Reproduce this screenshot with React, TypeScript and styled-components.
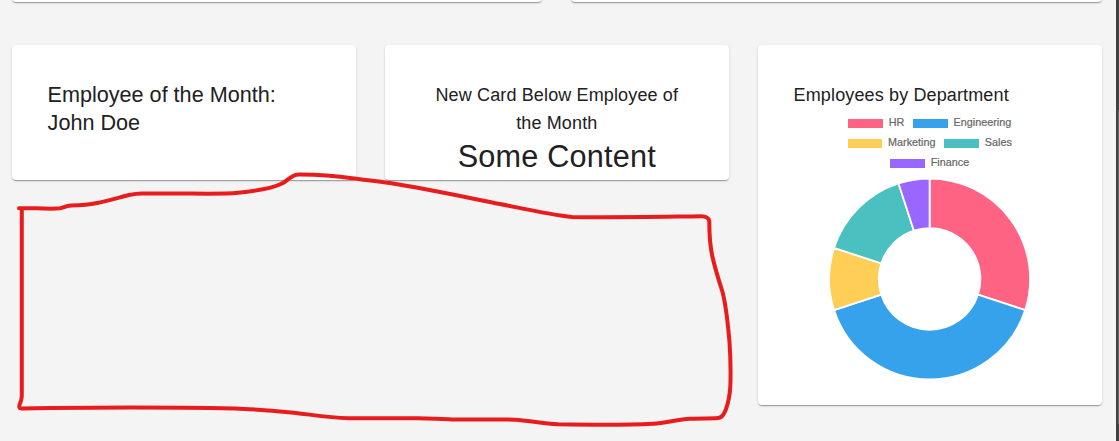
import React from "react";
import styled, { createGlobalStyle } from "styled-components";

const GlobalStyle = createGlobalStyle`
  * { box-sizing: border-box; }
  body { margin: 0; background: #f4f4f4; overflow: hidden; }
`;

const Page = styled.div`
  position: relative;
  display: flex;
  height: 441px;
  overflow: hidden;
  background: #f4f4f4;
  color: #212121;
  font-family: "Liberation Sans", Arial, sans-serif;
`;

const Content = styled.main`
  flex: 1;
  display: flex;
  flex-direction: column;
  gap: 43px;
  padding: 0 14px 0 12px;
`;

const UpperRow = styled.div`
  display: grid;
  grid-template-columns: 530px 531px;
  grid-template-rows: 2px;
  gap: 29px;
  height: 2px;
  align-items: end;
`;

const CardRow = styled.div`
  display: grid;
  grid-template-columns: repeat(3, 344px);
  gap: 29px;
  align-items: start;
`;

const Card = styled.section<{ $height: number; $center?: boolean }>`
  height: ${(p) => p.$height}px;
  padding: 36px 36px 0 35.6px;
  border-radius: 4px;
  background: #fff;
  text-align: ${(p) => (p.$center ? "center" : "left")};
  box-shadow: 0 2px 1px -1px rgba(0, 0, 0, 0.2), 0 1px 1px 0 rgba(0, 0, 0, 0.14),
    0 1px 3px 0 rgba(0, 0, 0, 0.12);
`;

const Headline = styled.h2`
  margin: 0;
  max-width: 250px;
  font-size: 21.6px;
  font-weight: 400;
  line-height: 28px;
`;

const Title = styled.h3`
  margin: 0;
  font-size: 18px;
  font-weight: 400;
  line-height: 28px;
  letter-spacing: 0.0075em;
`;

const Figure = styled.p`
  margin: 0;
  font-size: 30.6px;
  line-height: 38px;
  letter-spacing: 0.00735em;
`;

const Legend = styled.div`
  display: flex;
  flex-direction: column;
  align-items: center;
  padding-top: 3px;
`;

const LegendRow = styled.div`
  display: flex;
  gap: 9px;
  height: 20px;
`;

const LegendItem = styled.div`
  display: flex;
  align-items: center;
  gap: 5.8px;
  height: 20px;
  color: #666;
  font-size: 10.8px;
  line-height: 20px;
  -webkit-text-stroke: 0.2px #666;
`;

const Swatch = styled.span<{ $color: string }>`
  width: 34.5px;
  height: 9px;
  margin-top: 3px;
  background: ${(p) => p.$color};
`;

const Chart = styled.svg`
  display: block;
  width: 204px;
  height: 204px;
  margin: 5px auto 0;
`;

const Scrollbar = styled.aside`
  width: 3px;
  padding: 110px 0 0 2px;
  background: #424242;
`;

const Thumb = styled.div`
  height: 314px;
  background: #686868;
`;

const Scribble = styled.svg`
  position: absolute;
  left: 0;
  top: 0;
  pointer-events: none;
`;

const departments = [
  { name: "HR", share: 30, color: "#ff6384" },
  { name: "Engineering", share: 40, color: "#36a2eb" },
  { name: "Marketing", share: 10, color: "#ffce56" },
  { name: "Sales", share: 15, color: "#4bc0c0" },
  { name: "Finance", share: 5, color: "#9966ff" },
];

const legendRows = [departments.slice(0, 2), departments.slice(2, 4), departments.slice(4)];

const OUTER = 100.5;
const INNER = 50.8;

function point(radius: number, share: number) {
  const a = (share / 100) * Math.PI * 2 - Math.PI / 2;
  return `${(radius * Math.cos(a)).toFixed(3)} ${(radius * Math.sin(a)).toFixed(3)}`;
}

function slice(from: number, to: number) {
  return `M${point(OUTER, from)}A${OUTER} ${OUTER} 0 0 1 ${point(OUTER, to)}L${point(INNER, to)}A${INNER} ${INNER} 0 0 0 ${point(INNER, from)}Z`;
}

function Doughnut() {
  let start = 0;
  return (
    <Chart viewBox="-101.6 -102 204 204">
      {departments.map((d) => {
        const from = start;
        start += d.share;
        return (
          <path key={d.name} d={slice(from, start)} fill={d.color} stroke="#fff" strokeWidth="1.8" />
        );
      })}
    </Chart>
  );
}

export default function App() {
  return (
    <>
      <GlobalStyle />
      <Page>
        <Content>
          <UpperRow>
            <Card $height={80} />
            <Card $height={80} />
          </UpperRow>
          <CardRow>
            <Card $height={135}>
              <Headline>Employee of the Month: John Doe</Headline>
            </Card>
            <Card $height={135} $center>
              <Title>New Card Below Employee of the Month</Title>
              <Figure>Some Content</Figure>
            </Card>
            <Card $height={360}>
              <Title>Employees by Department</Title>
              <Legend>
                {legendRows.map((row) => (
                  <LegendRow key={row[0].name}>
                    {row.map((d) => (
                      <LegendItem key={d.name}>
                        <Swatch $color={d.color} />
                        {d.name}
                      </LegendItem>
                    ))}
                  </LegendRow>
                ))}
              </Legend>
              <Doughnut />
            </Card>
          </CardRow>
        </Content>
        <Scrollbar>
          <Thumb />
        </Scrollbar>
        <Scribble width="1119" height="441" viewBox="0 0 1119 441">
          <path
            d="M19 208.3H36C44 208.6 55 208.8 60 208.3C64 207.4 66 205.8 71 205.5C80 205.4 88 205 97 203C109 200.6 119 197.5 129 195C135 193.8 137 193.5 142 193.5H180C205 193.7 225 194.2 238 192.8C256 191 272 188.5 282 183.5C289 180 291 174.4 299 174.4C318 174.3 337 176 354 178.5C365 180 377 181 390 183C425 188.5 460 196 500 204C525 209 552 215 572 217C610 217.8 660 216.8 701 216.3C706 216.2 709.3 218 709.3 222C709.3 235 710 246 712.5 257C715.5 270 719 281 722.5 292C726.5 307 728 325 729.5 342C730.5 356 730.8 371 730.4 385C730 395 728.5 402 726 409C724 414 722.5 418.2 716 418.3C707 418.5 697 418.2 690 418.7C678 419.4 665 423 653 423.7C635 424.6 590 424.8 558 424.2C543 423.5 528 420.5 515 419.7C495 419.3 470 419.7 452 419.4C440 419.2 430 418.3 418 418.3H348C325 417.4 305 413.5 283 411.7C264 410.3 250 408.8 235 408.5C180 407.3 100 407.3 50 408L22 408.6C18.5 408.5 19 405.8 20 403.5C21 400.8 21.8 399 21.8 396V208.3"
            fill="none"
            stroke="#e81c1c"
            strokeWidth="4"
            strokeLinejoin="round"
            strokeLinecap="round"
          />
        </Scribble>
      </Page>
    </>
  );
}
